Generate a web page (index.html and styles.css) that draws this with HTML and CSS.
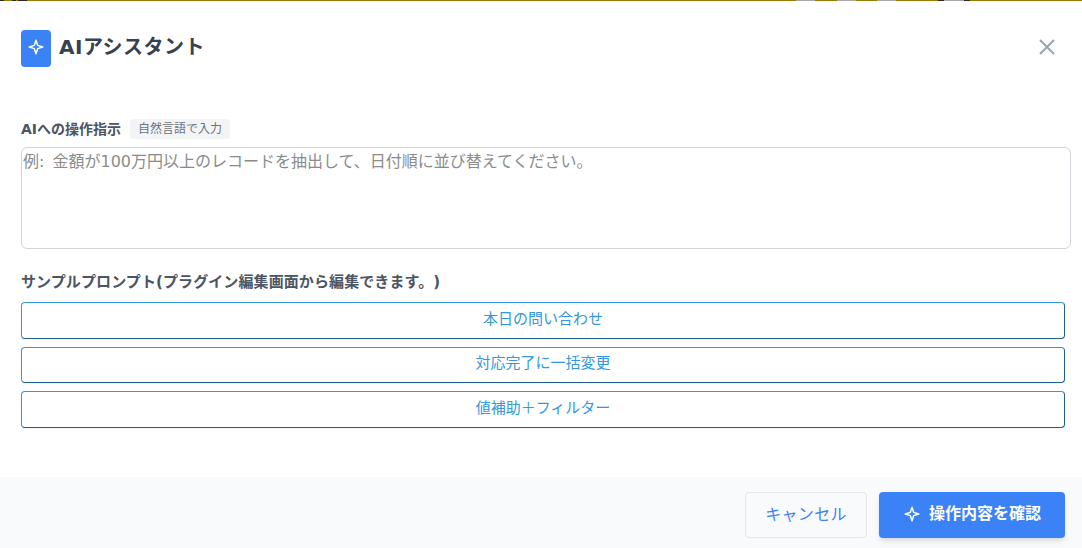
FILE: index.html
```html
<!DOCTYPE html>
<html lang="ja">
<head>
<meta charset="utf-8">
<title>AIアシスタント</title>
<link rel="stylesheet" href="styles.css">
</head>
<body>
<div class="strip">
  <span class="seg dark w4"></span><span class="seg gold w8"></span><span class="seg dark w4"></span><span class="seg gold w2"></span><span class="seg dark w9"></span><span class="seg gold fill"></span>
  <span class="seg gray w19"></span><span class="seg gold w22"></span><span class="seg gray w19"></span><span class="seg gold w21"></span><span class="seg gray w19"></span><span class="seg gold w42"></span><span class="seg dark w6"></span><span class="seg gray w20"></span><span class="seg dark w6"></span><span class="seg gold w112"></span>
</div>
<div class="dialog">
  <header class="head">
    <div class="title-wrap">
      <span class="badge">
        <svg class="spark" width="18" height="18" viewBox="0 0 24 24" fill="none" stroke="currentColor" stroke-width="2" stroke-linejoin="round"><path d="M12 3l2.2 6.8L21 12l-6.8 2.2L12 21l-2.2-6.8L3 12l6.8-2.2z"/></svg>
      </span>
      <h1 class="title">AIアシスタント</h1>
    </div>
    <button class="close" aria-label="閉じる">
      <svg width="18" height="18" viewBox="0 0 18 18" fill="none" stroke="currentColor" stroke-width="2"><path d="M2 2l14 14M16 2L2 16"/></svg>
    </button>
  </header>
  <main class="body">
    <div class="label-row">
      <span class="label">AIへの操作指示</span>
      <span class="tag">自然言語で入力</span>
    </div>
    <textarea class="input" placeholder="例: 金額が100万円以上のレコードを抽出して、日付順に並び替えてください。"></textarea>
    <p class="sample-title">サンプルプロンプト(プラグイン編集画面から編集できます。)</p>
    <div class="samples">
      <button class="sample s1">本日の問い合わせ</button>
      <button class="sample s2">対応完了に一括変更</button>
      <button class="sample s3">値補助＋フィルター</button>
    </div>
  </main>
  <footer class="foot">
    <button class="cancel">キャンセル</button>
    <button class="confirm">
      <svg width="18" height="18" viewBox="0 0 24 24" fill="none" stroke="currentColor" stroke-width="2" stroke-linejoin="round"><path d="M12 3l2.2 6.8L21 12l-6.8 2.2L12 21l-2.2-6.8L3 12l6.8-2.2z"/></svg>
      <span>操作内容を確認</span>
    </button>
  </footer>
</div>
</body>
</html>
```
FILE: styles.css
```css
* { box-sizing: border-box; }
html, body { margin: 0; height: 100%; }
body {
  width: 1082px; height: 548px; overflow: hidden; background: #fff;
  font-family: "DejaVu Sans", "Noto Sans CJK JP", sans-serif;
  color: #374151;
  display: flex; flex-direction: column;
  text-spacing-trim: space-all;
}
.strip { display: flex; height: 1px; flex: none; }
.seg { display: block; height: 1px; }
.gold { background: #9a7b00; }
.gray { background: #a8a8a8; }
.dark { background: #2c2a26; }
.fill { flex: 1; }
.w2 { width: 2px; } .w4 { width: 4px; } .w6 { width: 6px; } .w8 { width: 8px; } .w9 { width: 9px; } .w19 { width: 19px; }
.w20 { width: 20px; } .w21 { width: 21px; } .w22 { width: 22px; } .w42 { width: 42px; } .w112 { width: 112px; }
.dialog { flex: 1; display: flex; flex-direction: column; min-height: 0; }
.head { display: flex; justify-content: space-between; align-items: center; padding: 29px 26px 0 21px; height: 66px; flex: none; }
.title-wrap { display: flex; align-items: center; gap: 8px; }
.badge { width: 30px; height: 37px; border-radius: 4px; background: #3b82f6; color: #fff; display: flex; align-items: center; justify-content: center; padding-bottom: 4px; }
.title { margin: 0 0 4px; font-size: 20px; line-height: 28px; font-weight: 700; color: #374151; letter-spacing: .5px; }
.close { border: 0; background: none; padding: 0; color: #9ca3af; display: flex; margin-bottom: 4px; }
.body { flex: 1; padding: 52px 17px 0 21px; display: flex; flex-direction: column; min-height: 0; }
.label-row { display: flex; align-items: center; gap: 9px; height: 20px; }
.label { font-size: 14px; line-height: 20px; font-weight: 700; color: #4b5563; margin-bottom: 1px; }
.tag { font-size: 12px; color: #6b7280; background: #f3f4f6; border-radius: 4px; padding: 0 8px; height: 20px; line-height: 20px; }
.input { display: block; width: 1050px; height: 102px; margin-top: 8px; padding: 4px 1px 2px; border: 1px solid #d1d5db; border-radius: 6px; resize: none; font: 16px/20px "DejaVu Sans", "Noto Sans CJK JP", sans-serif; background: #fff; outline: 0; }
.input::placeholder { color: #8b8b8b; opacity: 1; word-spacing: 3px; }
.sample-title { margin: 23px 0 0; font-size: 15px; line-height: 20px; font-weight: 700; color: #4b5563; letter-spacing: .1px; }
.samples { display: flex; flex-direction: column; margin-top: 10px; }
.sample { width: 1044px; height: 37px; background: #fff; border: 1px solid #3498db; border-right-color: #1f5f8b; border-bottom-color: #1f5f8b; border-radius: 4px; color: #3498db; font: 15px/20px "DejaVu Sans", "Noto Sans CJK JP", sans-serif; padding: 0 0 4px; box-shadow: 0 1px 2px rgba(0,0,0,.05); }
.s2 { margin-top: 8px; height: 36px; }
.s3 { margin-top: 8px; }
.foot { flex: none; height: 71px; background: #f9fafb; display: flex; justify-content: flex-end; align-items: flex-start; gap: 12px; padding: 15px 17px 0 0; }
.cancel { width: 122px; height: 46px; background: #f9fafb; border: 1px solid #e5e7eb; border-radius: 4px; color: #3b82f6; font: 16px/24px "DejaVu Sans", "Noto Sans CJK JP", sans-serif; letter-spacing: .3px; padding: 0; }
.confirm { width: 186px; height: 46px; background: #3b82f6; border: 0; border-radius: 4px; color: #fff; display: flex; align-items: center; justify-content: center; gap: 8px; font: 700 16px/24px "DejaVu Sans", "Noto Sans CJK JP", sans-serif; padding: 0 0 2px; box-shadow: 0 4px 6px -1px rgba(0,0,0,.1), 0 2px 4px -2px rgba(0,0,0,.1); }
```
